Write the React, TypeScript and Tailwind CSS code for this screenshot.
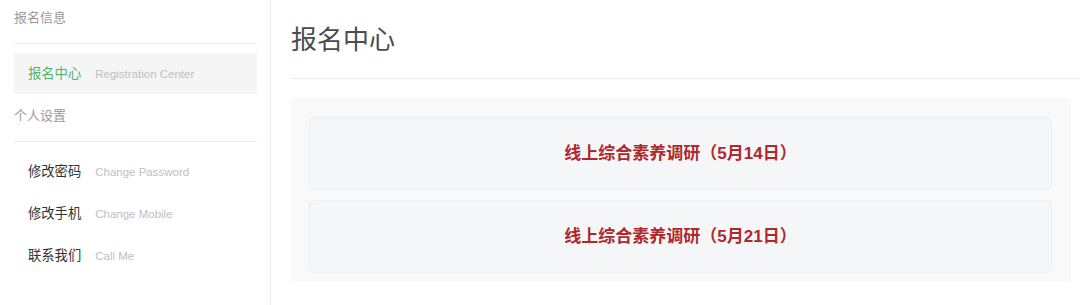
const NavItem = ({
    label,
    sub,
    active = false,
}: {
    label: string
    sub: string
    active?: boolean
}) => (
    <div
        className={`flex h-[41px] items-center pl-[14px] ${active ? 'bg-[#f5f5f5]' : ''}`}
    >
        <span
            className={`text-[13.3px] leading-[18px] ${active ? 'text-[#4fb56a]' : 'text-[#333333]'}`}
        >
            {label}
        </span>
        <span className="ml-[14px] text-[11.5px] leading-[18px] text-[#c0c0c0]">
            {sub}
        </span>
    </div>
)

const surveys = ['线上综合素养调研（5月14日）', '线上综合素养调研（5月21日）']

export default function App() {
    return (
        <div className="flex h-[305px] w-[1080px] bg-white font-['Liberation_Sans','Noto_Sans_CJK_SC',sans-serif]">
            <aside className="w-[271px] shrink-0 border-r border-[#efefef] pl-[14px] pr-[13px]">
                <div className="h-[44px] border-b border-[#ebebeb] pt-[9px] text-[13px] leading-[18px] text-[#9a9a9a]">
                    报名信息
                </div>
                <div className="mt-[9px]">
                    <NavItem label="报名中心" sub="Registration Center" active />
                </div>
                <div className="h-[48px] border-b border-[#ebebeb] pt-[13px] text-[13px] leading-[18px] text-[#9a9a9a]">
                    个人设置
                </div>
                <div className="mt-[9px] flex flex-col gap-[1px]">
                    <NavItem label="修改密码" sub="Change Password" />
                    <NavItem label="修改手机" sub="Change Mobile" />
                    <NavItem label="联系我们" sub="Call Me" />
                </div>
            </aside>
            <main className="flex-1 pl-[20px]">
                <div className="h-[79px] border-b border-[#ececec] pt-[24px] text-[26px] leading-[32px] text-[#4a4b50]">
                    报名中心
                </div>
                <div className="mr-[9px] mt-[19px] flex flex-col gap-[10px] bg-[#f9f9f9] pb-[9px] pl-[18px] pr-[19px] pt-[19px]">
                    {surveys.map((title) => (
                        <div
                            key={title}
                            className="flex h-[73px] items-center justify-center rounded-[6px] border border-[#eeeff1] bg-[#f5f6f8]"
                        >
                            <span className="text-[17px] font-bold text-[#b0282c]">
                                {title}
                            </span>
                        </div>
                    ))}
                </div>
            </main>
        </div>
    )
}
